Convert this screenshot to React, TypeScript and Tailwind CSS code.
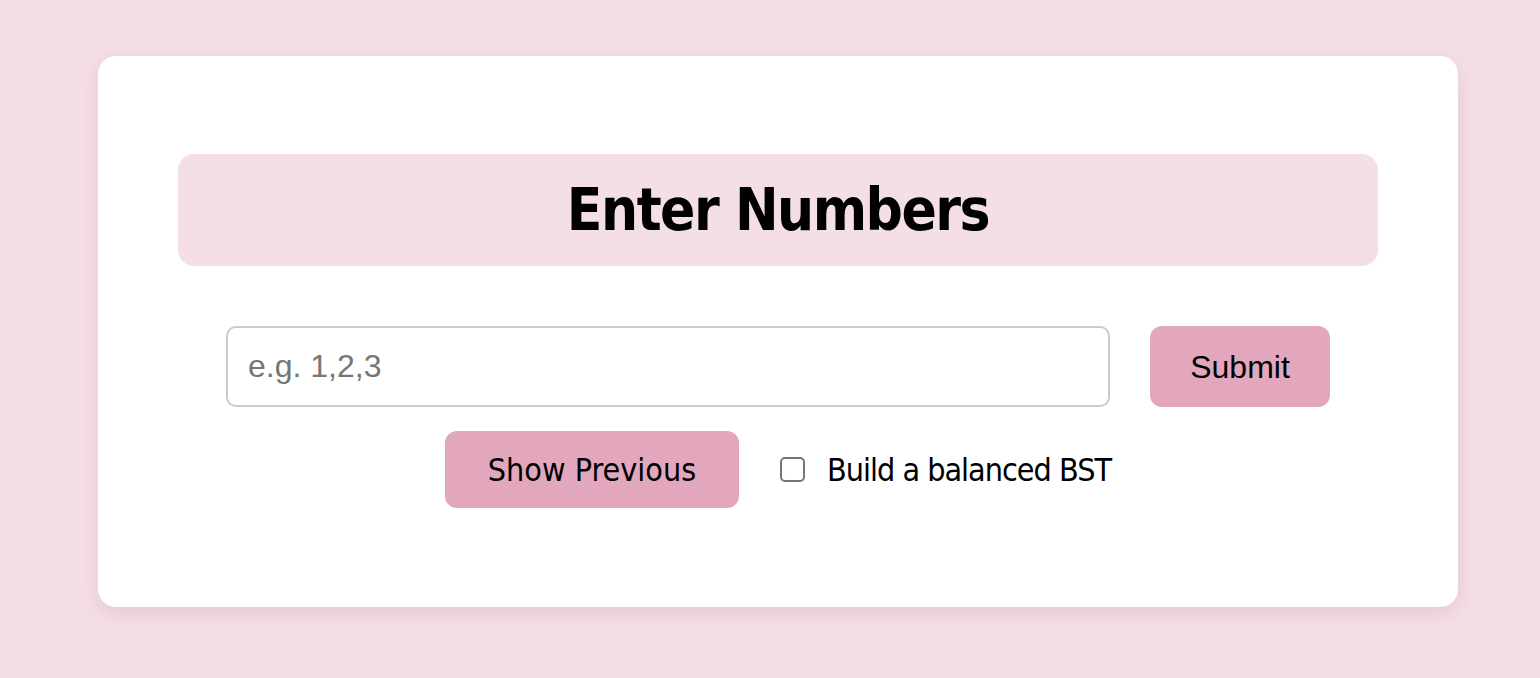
import { useState } from "react";

function App() {
  const [value, setValue] = useState("");
  const [balanced, setBalanced] = useState(false);

  return (
    <div className="min-h-[678px] w-full bg-[#f5dfe7] pt-[56px] pl-[98px]">
      {/* Card */}
      <div className="w-[1360px] rounded-[18px] bg-white px-[80px] pt-[98px] pb-[99px] shadow-[0_6px_22px_rgba(120,60,80,0.14)]">
        {/* Heading */}
        <div className="flex h-[112px] items-center justify-center rounded-[16px] bg-[#f5dfe7]">
          <h1 className="text-[58px] font-bold tracking-[-1.5px] text-black [font-family:'DejaVu_Sans_Condensed','DejaVu_Sans',sans-serif]">
            Enter Numbers
          </h1>
        </div>

        {/* Input row */}
        <div className="mt-[60px] flex items-center justify-center gap-[40px]">
          <input
            type="text"
            value={value}
            onChange={(e) => setValue(e.target.value)}
            placeholder="e.g. 1,2,3"
            className="h-[81px] w-[884px] rounded-[10px] border-2 border-[#cbcbcb] px-[20px] text-[32px] text-black outline-none placeholder:text-[#767676] [font-family:'Liberation_Sans',Arial,sans-serif]"
          />
          <button className="h-[81px] w-[180px] rounded-[12px] bg-[#e2a7bc] text-[32px] text-black [font-family:'Liberation_Sans',Arial,sans-serif]">
            Submit
          </button>
        </div>

        {/* Options row */}
        <div className="mt-[24px] flex items-center justify-center">
          <button className="h-[77px] w-[294px] rounded-[12px] bg-[#e2a7bc] text-[32px] text-black [font-family:'DejaVu_Sans_Condensed','DejaVu_Sans',sans-serif]">
            Show Previous
          </button>
          <label className="ml-[41px] flex items-center gap-[22px] text-[32px] tracking-[-1px] text-black [font-family:'DejaVu_Sans_Condensed','DejaVu_Sans',sans-serif]">
            <input
              type="checkbox"
              checked={balanced}
              onChange={(e) => setBalanced(e.target.checked)}
              className="h-[25px] w-[25px] appearance-none rounded-[5px] border-2 border-[#767676] bg-white checked:bg-[#e2a7bc]"
            />
            Build a balanced BST
          </label>
        </div>
      </div>
    </div>
  );
}

export default App;
